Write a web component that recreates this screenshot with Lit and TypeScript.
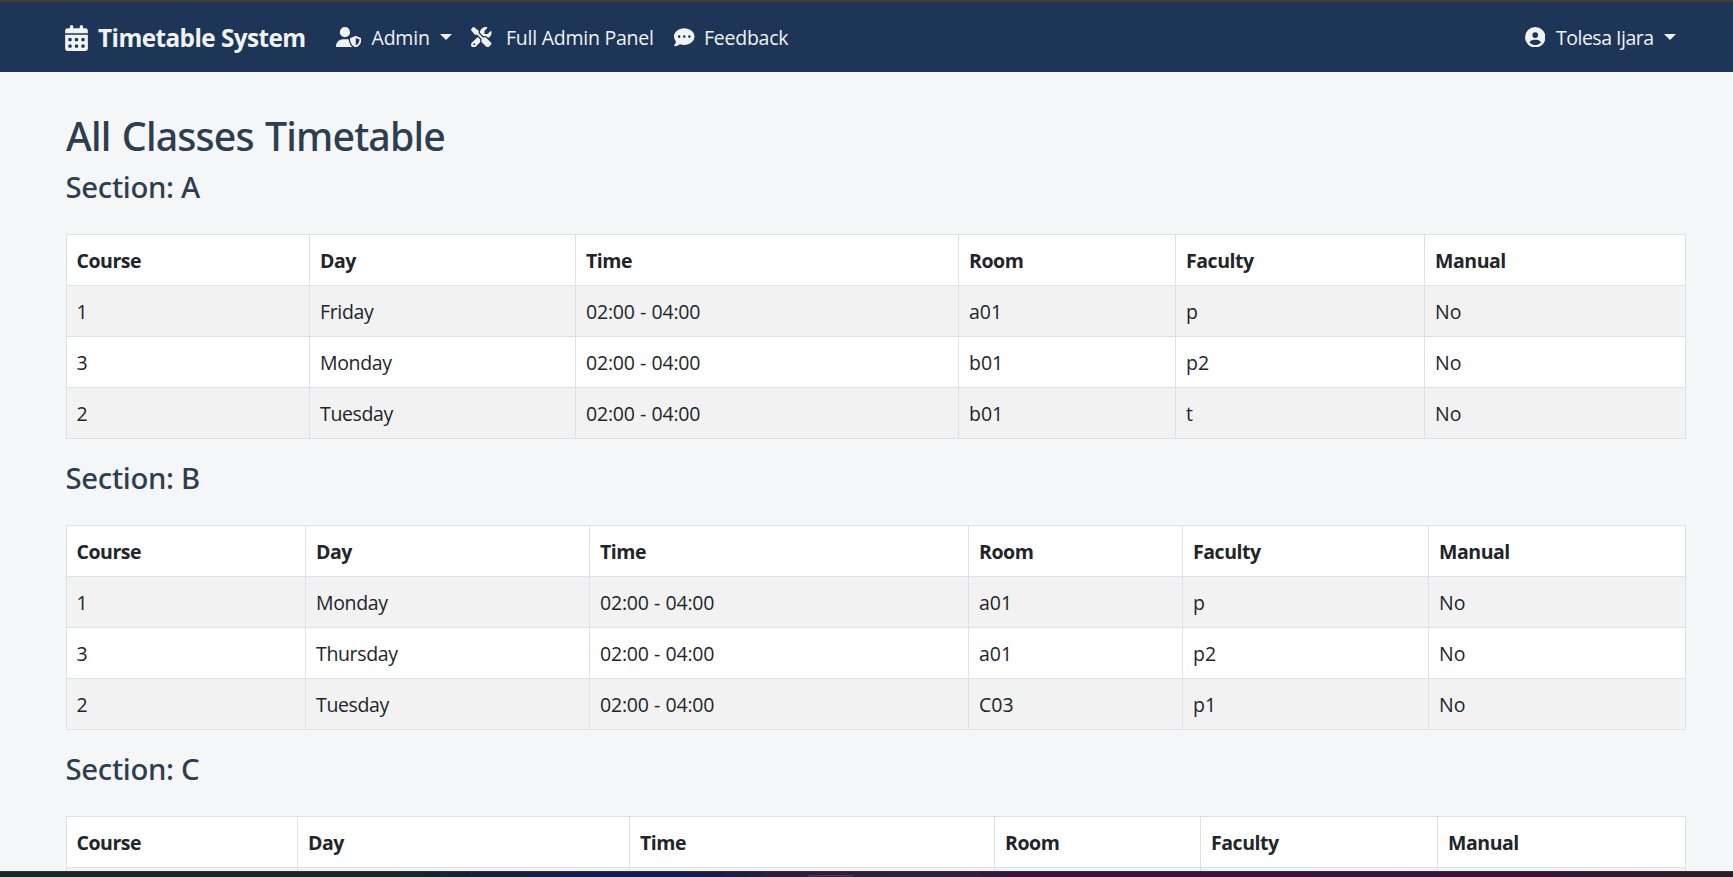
import { LitElement, html, css, svg } from "lit";
import { customElement, property } from "lit/decorators.js";

interface Row {
  course: string;
  day: string;
  time: string;
  room: string;
  faculty: string;
  manual: string;
}

interface Section {
  name: string;
  widths: number[];
  rows: Row[];
}

const slot = (course: string, day: string, room: string, faculty: string): Row => ({
  course, day, time: "02:00 - 04:00", room, faculty, manual: "No",
});

const EMPTY: Row = { course: "", day: "", time: "", room: "", faculty: "", manual: "" };

const SECTIONS: Section[] = [
  {
    name: "A",
    widths: [243, 266, 383, 217, 249, 261],
    rows: [slot("1", "Friday", "a01", "p"), slot("3", "Monday", "b01", "p2"), slot("2", "Tuesday", "b01", "t")],
  },
  {
    name: "B",
    widths: [239, 284, 379, 214, 246, 257],
    rows: [slot("1", "Monday", "a01", "p"), slot("3", "Thursday", "a01", "p2"), slot("2", "Tuesday", "C03", "p1")],
  },
  {
    name: "C",
    widths: [231, 332, 365, 206, 237, 248],
    rows: [EMPTY],
  },
];

const ICONS = {
  calendar: {
    box: "0 0 448 512",
    d: "M128 0c17.7 0 32 14.3 32 32V64H288V32c0-17.7 14.3-32 32-32s32 14.3 32 32V64h48c26.5 0 48 21.5 48 48v48H0V112C0 85.5 21.5 64 48 64H96V32c0-17.7 14.3-32 32-32zM0 192H448V464c0 26.5-21.5 48-48 48H48c-26.5 0-48-21.5-48-48V192zm64 80v32c0 8.8 7.2 16 16 16h32c8.8 0 16-7.2 16-16V272c0-8.8-7.2-16-16-16H80c-8.8 0-16 7.2-16 16zm128 0v32c0 8.8 7.2 16 16 16h32c8.8 0 16-7.2 16-16V272c0-8.8-7.2-16-16-16H208c-8.8 0-16 7.2-16 16zm144-16c-8.8 0-16 7.2-16 16v32c0 8.8 7.2 16 16 16h32c8.8 0 16-7.2 16-16V272c0-8.8-7.2-16-16-16H336zM64 400v32c0 8.8 7.2 16 16 16h32c8.8 0 16-7.2 16-16V400c0-8.8-7.2-16-16-16H80c-8.8 0-16 7.2-16 16zm144-16c-8.8 0-16 7.2-16 16v32c0 8.8 7.2 16 16 16h32c8.8 0 16-7.2 16-16V400c0-8.8-7.2-16-16-16H208zm112 16v32c0 8.8 7.2 16 16 16h32c8.8 0 16-7.2 16-16V400c0-8.8-7.2-16-16-16H336c-8.8 0-16 7.2-16 16z",
  },
  shield: {
    box: "0 0 640 512",
    d: "M224 256A128 128 0 1 0 224 0a128 128 0 1 0 0 256zm-45.7 48C79.8 304 0 383.8 0 482.3C0 498.7 13.3 512 29.7 512H418.3c1.8 0 3.5-.2 5.3-.5c-76.3-55.1-99.8-141-103.1-200.2c-16.1-4.8-33.1-7.3-50.7-7.3H178.3zm308.8-78.3l-120 48C358 277.4 352 286.2 352 296c0 63.3 25.9 168.8 134.8 214.2c5.9 2.5 12.6 2.5 18.5 0C614.1 464.8 640 359.3 640 296c0-9.8-6-18.6-15.1-22.3l-120-48c-5.7-2.3-12.1-2.3-17.8 0zM591.4 312c-3.9 50.7-27.2 116.7-95.4 149.7V273.8L591.4 312z",
  },
  tools: {
    box: "0 0 512 512",
    d: "M78.6 5C69.1-2.4 55.6-1.5 47 7L7 47c-8.5 8.5-9.4 22-2.1 31.6l80 104c4.5 5.9 11.6 9.4 19 9.4h54.1l109 109c-14.7 29-10 65.4 14.3 89.6l112 112c12.5 12.5 32.8 12.5 45.3 0l64-64c12.5-12.5 12.5-32.8 0-45.3l-112-112c-24.2-24.2-60.6-29-89.6-14.3l-109-109V104c0-7.5-3.5-14.5-9.4-19L78.6 5zM19.9 396.1C7.2 408.8 0 426.1 0 444.1C0 481.6 30.4 512 67.9 512c18 0 35.3-7.2 48-19.9L233.7 374.3c-7.8-20.9-9-43.6-3.6-65.1l-61.7-61.7L19.9 396.1zM512 144c0-10.5-1.1-20.7-3.2-30.5c-2.4-11.2-16.1-14.1-24.2-6l-63.9 63.9c-3 3-7.1 4.7-11.3 4.7H352c-8.8 0-16-7.2-16-16V102.6c0-4.2 1.7-8.3 4.7-11.3l63.9-63.9c8.1-8.1 5.2-21.8-6-24.2C388.7 1.1 378.5 0 368 0C288.5 0 224 64.5 224 144l0 .8 85.3 85.3c36-9.1 75.8 .5 104 28.7L429 274.5c49-23 83-72.8 83-130.5zM56 432a24 24 0 1 1 48 0 24 24 0 1 1 -48 0z",
  },
  comment: {
    box: "0 0 512 512",
    d: "M256 448c141.4 0 256-93.1 256-208S397.4 32 256 32S0 125.1 0 240c0 45.1 17.7 86.8 47.7 120.9c-1.9 24.5-11.4 46.3-21.4 62.9c-5.5 9.2-11.1 16.6-15.2 21.6c-2.1 2.5-3.7 4.4-4.9 5.7c-.6 .6-1 1.1-1.3 1.4l-.3 .3c-4.6 4.6-5.9 11.4-3.4 17.4c2.5 6 8.3 9.9 14.8 9.9c28.7 0 57.6-8.9 81.6-19.3c22.9-10 42.4-21.9 54.3-30.6c31.8 11.5 67 17.9 104.1 17.9zM128 208a32 32 0 1 1 0 64 32 32 0 1 1 0-64zm128 0a32 32 0 1 1 0 64 32 32 0 1 1 0-64zm96 32a32 32 0 1 1 64 0 32 32 0 1 1 -64 0z",
  },
  user: {
    box: "0 0 512 512",
    d: "M399 384.2C376.9 345.8 335.4 320 288 320H224c-47.4 0-88.9 25.8-111 64.2c35.2 39.2 86.2 63.8 143 63.8s107.8-24.7 143-63.8zM0 256a256 256 0 1 1 512 0A256 256 0 1 1 0 256zm256 16a72 72 0 1 0 0-144 72 72 0 1 0 0 144z",
  },
};

const icon = (name: keyof typeof ICONS, cls: string) => html`
  <svg class="icon ${cls}" viewBox=${ICONS[name].box} aria-hidden="true">
    ${svg`<path fill="currentColor" d=${ICONS[name].d}></path>`}
  </svg>`;

@customElement("app-navbar")
export class AppNavbar extends LitElement {
  static styles = css`
    :host { display: block; }
    .bar {
      display: flex;
      align-items: center;
      box-sizing: border-box;
      height: 72px;
      padding: 0 57px 0 65px;
      border-top: 2px solid #403f36;
      background: #1d3557;
      color: #f1f2f4;
      font-size: 19.5px;
      line-height: 30px;
      white-space: nowrap;
    }
    .brand, .link { display: flex; align-items: center; flex: none; }
    .brand { width: 270.5px; font-size: 24.3px; font-weight: 700; letter-spacing: -0.55px; }
    .label { padding-top: 2px; }
    .icon { display: block; flex: none; width: 20.5px; height: 20.5px; }
    .icon-brand { width: 23px; height: 26px; margin: 2px 10px 0 0; }
    .icon-wide { width: 25.5px; margin-right: 10.5px; }
    .icon-tools { margin-right: 14.5px; }
    .icon-chat { margin-right: 9.5px; }
    .icon-user { margin-right: 11px; }
    .admin { width: 135.5px; }
    .admin .label { width: 68.5px; letter-spacing: -0.2px; }
    .panel { width: 203px; }
    .panel .label { letter-spacing: -0.25px; }
    .feedback .label { letter-spacing: -0.25px; }
    .account { margin-left: auto; }
    .account .label { width: 108px; letter-spacing: -0.5px; }
    .caret {
      border-top: 6px solid currentColor;
      border-left: 6px solid transparent;
      border-right: 6px solid transparent;
    }
  `;

  render() {
    return html`
      <nav class="bar">
        <div class="brand">${icon("calendar", "icon-brand")}<span class="label">Timetable System</span></div>
        <div class="link admin">${icon("shield", "icon-wide")}<span class="label">Admin</span><span class="caret"></span></div>
        <div class="link panel">${icon("tools", "icon-tools")}<span class="label">Full Admin Panel</span></div>
        <div class="link feedback">${icon("comment", "icon-chat")}<span class="label">Feedback</span></div>
        <div class="link account">${icon("user", "icon-user")}<span class="label">Tolesa Ijara</span><span class="caret"></span></div>
      </nav>`;
  }
}

@customElement("section-table")
export class SectionTable extends LitElement {
  @property({ attribute: false }) section!: Section;

  static styles = css`
    :host { display: block; }
    .title {
      margin: 0 0 29px -0.5px;
      padding-top: 1px;
      color: #2c3e50;
      font-family: "Noto Sans", sans-serif;
      font-size: 29.3px;
      font-weight: 500;
      line-height: 36px;
      letter-spacing: -0.3px;
    }
    .table {
      width: 1620px;
      table-layout: fixed;
      border-collapse: separate;
      border-spacing: 0;
      border: solid #dee2e6;
      border-width: 1px 0 0 1px;
      color: #212529;
      font-size: 19.5px;
      line-height: 30px;
    }
    .cell {
      box-sizing: border-box;
      height: 51px;
      padding: 11px 9px 9px 10px;
      border: solid #dee2e6;
      border-width: 0 1px 1px 0;
      background: #fff;
      text-align: left;
      vertical-align: middle;
      font-weight: 400;
    }
    .head { font-weight: 700; letter-spacing: -0.45px; }
    .cell:first-child { padding-left: 9.5px; }
    .day { letter-spacing: -0.35px; }
    .time { letter-spacing: -0.2px; word-spacing: 0.5px; }
    .striped .cell { background: #f2f2f2; }
  `;

  render() {
    const { name, widths, rows } = this.section;
    return html`
      <h2 class="title">Section: ${name}</h2>
      <table class="table">
        <colgroup>${widths.map((w) => html`<col style="width:${w}px">`)}</colgroup>
        <thead>
          <tr>${["Course", "Day", "Time", "Room", "Faculty", "Manual"].map((h) => html`<th class="cell head">${h}</th>`)}</tr>
        </thead>
        <tbody>
          ${rows.map((r, i) => html`
            <tr class=${i % 2 === 0 ? "striped" : ""}>
              <td class="cell">${r.course}</td>
              <td class="cell day">${r.day}</td>
              <td class="cell time">${r.time}</td>
              <td class="cell">${r.room}</td>
              <td class="cell">${r.faculty}</td>
              <td class="cell">${r.manual}</td>
            </tr>`)}
        </tbody>
      </table>`;
  }
}

@customElement("app-root")
export class AppRoot extends LitElement {
  static styles = css`
    :host {
      display: flex;
      flex-direction: column;
      height: 877px;
      overflow: hidden;
      background: #f4f6f8;
      font-family: "Open Sans", "Noto Sans", sans-serif;
    }
    .page {
      flex: 1;
      min-height: 0;
      box-sizing: border-box;
      padding: 40px 0 0 66px;
      overflow: hidden;
    }
    .heading {
      margin: 0 0 8px;
      color: #2c3e50;
      font-family: "Noto Sans", sans-serif;
      font-size: 39.3px;
      font-weight: 500;
      line-height: 48px;
      letter-spacing: -0.85px;
      word-spacing: 2px;
    }
    .sections { display: flex; flex-direction: column; gap: 20px; }
    .taskbar {
      display: flex;
      flex: none;
      justify-content: center;
      align-items: flex-end;
      box-sizing: border-box;
      height: 6px;
      padding-right: 71px;
      border-top: 1px solid #303038;
      background: linear-gradient(90deg, #1a2428 0, #1a2428 400px, #151f3c 500px, #171a52 620px, #171a4c 690px, #2f1c3a 780px, #33203a 950px, #3c1042 1020px, #3a103f 1400px, #3b1233 1550px, #2c1d29 1700px, #2b1e28 1733px);
    }
    .handle {
      width: 46px;
      height: 2px;
      box-sizing: border-box;
      border-top: 1px solid #53385a;
      border-radius: 3px 3px 0 0;
      background: #3d2440;
    }
  `;

  render() {
    return html`
      <app-navbar></app-navbar>
      <main class="page">
        <h1 class="heading">All Classes Timetable</h1>
        <div class="sections">
          ${SECTIONS.map((s) => html`<section-table .section=${s}></section-table>`)}
        </div>
      </main>
      <div class="taskbar"><span class="handle"></span></div>`;
  }
}
